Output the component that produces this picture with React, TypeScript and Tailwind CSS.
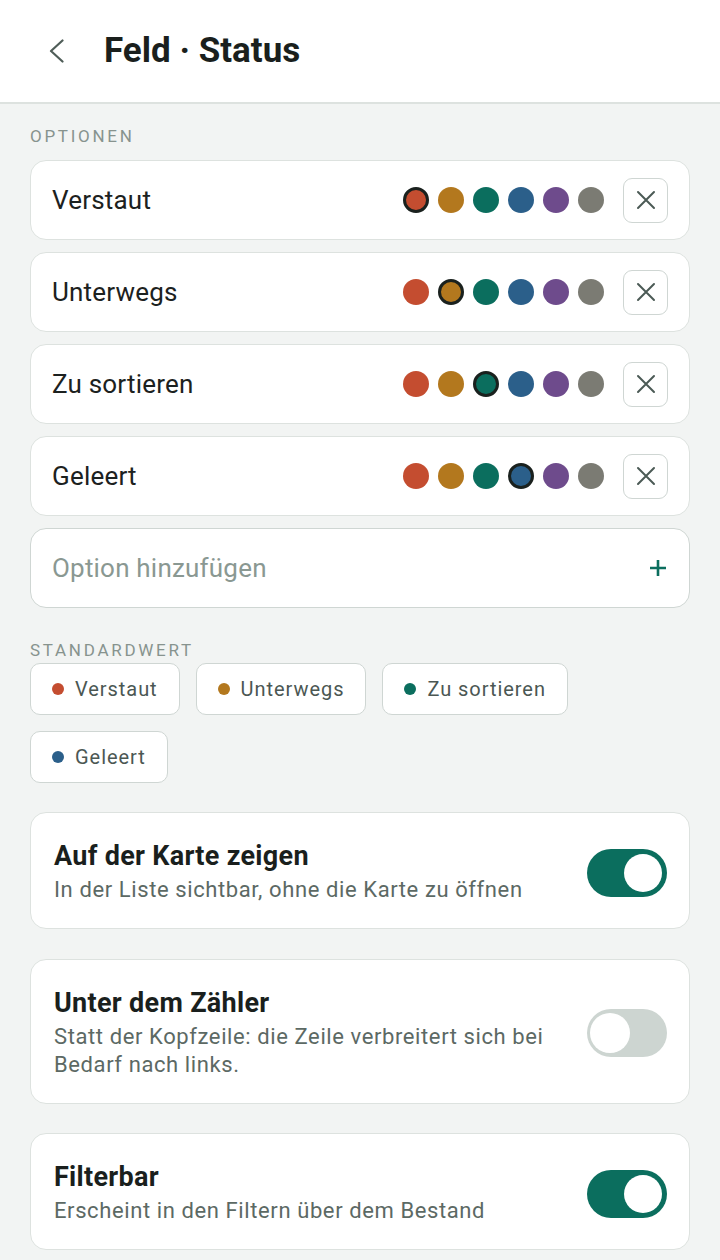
import React from "react";

const COLORS = ["#c44d30", "#b3781e", "#0b6e5e", "#2b5f8a", "#6e4b8c", "#7b7b73"];

const OPTIONS = [
  { label: "Verstaut", sel: 0 },
  { label: "Unterwegs", sel: 1 },
  { label: "Zu sortieren", sel: 2 },
  { label: "Geleert", sel: 3 },
];

function OptionRow({ label, sel }: { label: string; sel: number }) {
  return (
    <div className="flex h-[80px] items-center rounded-[16px] border-[1.5px] border-[#dde2df] bg-white pl-[21px] pr-[21px]">
      <div className="flex-1 text-[26px] tracking-[0.2px] text-[#1c2120]">{label}</div>
      <div className="flex items-center gap-[9px]">
        {COLORS.map((c, i) => (
          <div
            key={c}
            className={
              i === sel
                ? "h-[26px] w-[26px] rounded-full border-[3px] border-[#1a211e]"
                : "h-[26px] w-[26px] rounded-full"
            }
            style={{ backgroundColor: c }}
          />
        ))}
      </div>
      <div className="ml-[19px] flex h-[45px] w-[45px] items-center justify-center rounded-[9px] border-[1.5px] border-[#cfd6d3]">
        <svg width="20" height="20" viewBox="0 0 20 20" fill="none">
          <path d="M2 2L18 18M18 2L2 18" stroke="#4b5a55" strokeWidth="2" strokeLinecap="round" />
        </svg>
      </div>
    </div>
  );
}

function Chip({ label, color }: { label: string; color: string }) {
  return (
    <div className="flex h-[52px] items-center rounded-[10px] border-[1.5px] border-[#cfd6d3] bg-white pl-[21px] pr-[21px]">
      <div className="h-[12px] w-[12px] rounded-full" style={{ backgroundColor: color }} />
      <span className="ml-[11px] text-[20px] tracking-[0.95px] text-[#4b5753]">{label}</span>
    </div>
  );
}

function Toggle({ on }: { on: boolean }) {
  return on ? (
    <div className="flex h-[48px] w-[80px] shrink-0 items-center justify-end rounded-full bg-[#0b6e5e] pr-[5px]">
      <div className="h-[38px] w-[38px] rounded-full bg-white" />
    </div>
  ) : (
    <div className="flex h-[48px] w-[80px] shrink-0 items-center justify-start rounded-full bg-[#cdd5d1] pl-[3px]">
      <div className="h-[40px] w-[40px] rounded-full bg-white" />
    </div>
  );
}

function ToggleCard({ title, sub, on }: { title: string; sub: string; on: boolean }) {
  return (
    <div className="flex items-center gap-[24px] rounded-[16px] border-[1.5px] border-[#dde2df] bg-white pb-[24px] pl-[23px] pr-[22px] pt-[28px]">
      <div className="flex-1">
        <div className="text-[27px] font-bold leading-[30px] tracking-[0.3px] text-[#1a1f1d]">{title}</div>
        <div className="mt-[5px] text-[22px] leading-[28px] tracking-[0.6px] text-[#5c6964]">{sub}</div>
      </div>
      <Toggle on={on} />
    </div>
  );
}

export default function App() {
  return (
    <div className="min-h-[1260px] bg-[#f2f4f3]" style={{ fontFamily: "Roboto, 'Noto Sans', sans-serif" }}>
      <div className="flex h-[104px] items-center border-b-2 border-[#dde2df] bg-white">
        <div className="ml-[48px] flex h-[24px] w-[18px] items-center justify-center">
          <svg width="18" height="24" viewBox="0 0 18 24" fill="none">
            <path d="M14.5 1.5L3 12L14.5 22.5" stroke="#4f5d58" strokeWidth="2.2" strokeLinecap="round" strokeLinejoin="round" />
          </svg>
        </div>
        <div className="ml-[38px] pt-[1px] text-[35px] font-bold text-[#1a1f1d]">Feld · Status</div>
      </div>

      <div className="px-[30px] pt-[22px]">
        <div className="text-[17px] leading-[20px] tracking-[0.16em] text-[#87938e]">OPTIONEN</div>
        <div className="mt-[14px] flex flex-col gap-[12px]">
          {OPTIONS.map((o) => (
            <OptionRow key={o.label} label={o.label} sel={o.sel} />
          ))}
          <div className="flex h-[80px] items-center rounded-[16px] border-[1.5px] border-[#cfd6d3] bg-white pl-[21px] pr-[22px]">
            <div className="flex-1 text-[26px] tracking-[0.2px] text-[#8a9892]">Option hinzufügen</div>
            <svg width="18" height="18" viewBox="0 0 18 18" fill="none">
              <path d="M9 1V17M1 9H17" stroke="#0b6e5e" strokeWidth="2.6" />
            </svg>
          </div>
        </div>

        <div className="mt-[32px] text-[17px] leading-[20px] tracking-[0.16em] text-[#87938e]">STANDARDWERT</div>
        <div className="mt-[3px] flex flex-wrap gap-x-[16px] gap-y-[16px]">
          <Chip label="Verstaut" color={COLORS[0]} />
          <Chip label="Unterwegs" color={COLORS[1]} />
          <Chip label="Zu sortieren" color={COLORS[2]} />
          <Chip label="Geleert" color={COLORS[3]} />
        </div>

        <div className="mt-[29px] flex flex-col gap-[29.5px] pb-[12px]">
          <ToggleCard title="Auf der Karte zeigen" sub="In der Liste sichtbar, ohne die Karte zu öffnen" on={true} />
          <ToggleCard
            title="Unter dem Zähler"
            sub="Statt der Kopfzeile: die Zeile verbreitert sich bei Bedarf nach links."
            on={false}
          />
          <ToggleCard title="Filterbar" sub="Erscheint in den Filtern über dem Bestand" on={true} />
        </div>
      </div>
    </div>
  );
}
